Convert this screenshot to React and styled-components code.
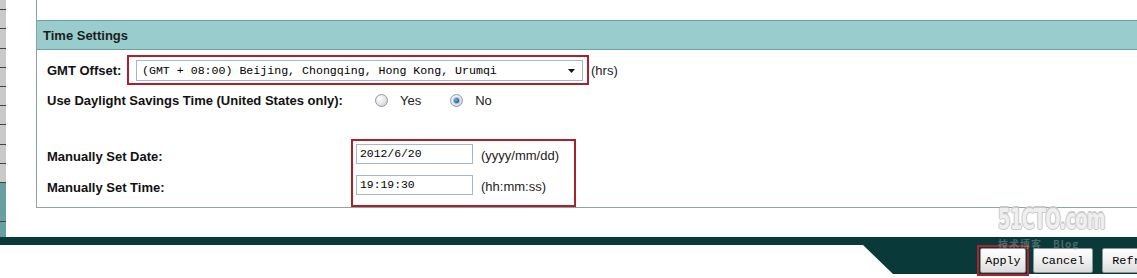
import React from "react";
import styled, { createGlobalStyle } from "styled-components";

const GlobalStyle = createGlobalStyle`
  html, body {
    margin: 0;
    padding: 0;
    overflow: hidden;
    background: #ffffff;
    font-family: "Liberation Sans", Arial, sans-serif;
  }
`;

const Page = styled.div`
  position: relative;
  width: 1137px;
  height: 278px;
  overflow: hidden;
`;

const Top = styled.div`
  display: flex;
  height: 237px;
`;

const Strip = styled.div`
  width: 6px;
  flex-shrink: 0;
  background:
    repeating-linear-gradient(
      to bottom,
      transparent 0,
      transparent 9px,
      #3c4545 9px,
      #3c4545 10px,
      transparent 10px,
      transparent 19.25px
    ),
    linear-gradient(to bottom, #cacaca 0, #cacaca 182px, #6a9f9f 182px);
`;

const Main = styled.div`
  flex: 1;
  padding-left: 30px;
`;

const Panel = styled.div`
  border-left: 1px solid #8ea4a4;
  border-bottom: 1px solid #8ea4a4;
  padding-top: 20px;
`;

const SectionHeader = styled.div`
  display: flex;
  align-items: center;
  height: 28px;
  padding-left: 6px;
  background: #99cccc;
  border-top: 1px solid #6f9f9f;
  border-bottom: 1px solid #6f9f9f;
  font-size: 13px;
  font-weight: bold;
  color: #1c1c1c;
`;

const Body = styled.div`
  padding-left: 10px;
`;

const Row = styled.div`
  display: flex;
  align-items: center;
  height: 30px;
  margin-top: ${(p) => p.$top || 0}px;
`;

const Label = styled.div`
  width: ${(p) => p.$width}px;
  flex-shrink: 0;
  font-size: 13px;
  font-weight: bold;
  color: #111;
  white-space: nowrap;
`;

const Highlight = styled.div`
  display: flex;
  flex-direction: ${(p) => (p.$column ? "column" : "row")};
  border: 2px solid #a8222c;
  padding: ${(p) => p.$pad};
  width: ${(p) => (p.$width ? `${p.$width}px` : "auto")};
  box-sizing: border-box;
  background: #fff;
`;

const SelectBox = styled.div`
  display: flex;
  align-items: center;
  justify-content: space-between;
  width: 447px;
  height: 21px;
  box-sizing: border-box;
  border: 1px solid #a9b4c0;
  padding: 0 7px 0 5px;
  font-family: "Liberation Mono", "Courier New", monospace;
  font-size: 11.6px;
  color: #000;
  white-space: nowrap;
`;

const Hint = styled.span`
  margin-left: ${(p) => p.$gap || 2}px;
  font-size: 13px;
  color: #222;
  white-space: nowrap;
`;

const RadioOption = styled.label`
  display: flex;
  align-items: center;
  margin-right: ${(p) => p.$after}px;
  font-size: 13px;
  color: #222;
`;

const Radio = styled.span`
  position: relative;
  width: 11px;
  height: 11px;
  margin-right: 12px;
  border-radius: 50%;
  border: 1px solid #8e9aa6;
  background: radial-gradient(circle at 35% 35%, #ffffff 0, #e4e4e4 55%, #c6c6c6 100%);

  &::after {
    content: "";
    display: ${(p) => (p.$checked ? "block" : "none")};
    position: absolute;
    left: 3px;
    top: 3px;
    width: 5px;
    height: 5px;
    border-radius: 50%;
    background: radial-gradient(circle at 40% 40%, #7fb2e0 0, #2a6299 60%, #173f66 100%);
    box-shadow: 0 0 0 1px #9cc0e0;
  }
`;

const ManualBlock = styled.div`
  display: flex;
  margin-top: 24px;
`;

const LabelColumn = styled.div`
  display: flex;
  flex-direction: column;
  width: 304px;
  padding-top: 2px;
`;

const Cell = styled.div`
  display: flex;
  align-items: center;
  height: 31px;
`;

const FieldRow = styled.div`
  display: flex;
  align-items: flex-start;
  height: 31px;
  padding: 3px 0 0 3px;
  box-sizing: border-box;
`;

const TextInput = styled.div`
  width: 117px;
  height: 20px;
  box-sizing: border-box;
  border: 1px solid #a6b7c6;
  padding-left: 3px;
  display: flex;
  align-items: center;
  font-family: "Liberation Mono", "Courier New", monospace;
  font-size: 11.4px;
  color: #000;
`;

const FieldHint = styled.span`
  margin-left: 8px;
  line-height: 20px;
  margin-top: 2px;
  font-size: 13px;
  color: #222;
  white-space: nowrap;
`;

const Band = styled.div`
  height: 8px;
  background: #0a3939;
`;

const Footer = styled.div`
  display: flex;
  height: 33px;
`;

const Toolbar = styled.div`
  position: relative;
  margin-left: 863px;
  flex: 1;
  display: flex;
  align-items: center;
  height: 31px;
  padding-left: 114px;

  &::before {
    content: "";
    position: absolute;
    left: 0;
    top: 0;
    right: 0;
    height: 29px;
    background: #0a3939;
    clip-path: polygon(0 0, 100% 0, 100% 100%, 30px 100%);
  }
`;

const ApplyMark = styled.div`
  position: relative;
  border: 2px solid #b0202a;
  padding: 1px;
  margin-right: 4px;
`;

const Button = styled.button`
  position: relative;
  flex-shrink: 0;
  width: ${(p) => p.$width}px;
  height: 25px;
  margin: 0 ${(p) => p.$after || 0}px 0 0;
  padding: 0;
  border: 1px solid #8f9597;
  border-radius: 2px;
  background: linear-gradient(to bottom, #fefefe 0, #f0f0f0 50%, #dcdcdc 100%);
  font-family: "Liberation Mono", "Courier New", monospace;
  font-size: 11.8px;
  color: #000;
  white-space: nowrap;
  overflow: hidden;
`;

const Watermark = styled.div`
  position: absolute;
  left: 998px;
  top: 205px;
  display: flex;
  flex-direction: column;
  align-items: flex-start;
  pointer-events: none;
`;

const MarkBig = styled.div`
  font-family: "DejaVu Sans Condensed", "DejaVu Sans", sans-serif;
  font-weight: bold;
  font-size: 20px;
  line-height: 20px;
  letter-spacing: -0.8px;
  color: #efefef;
  text-shadow:
    1px 0 0 #c9c9c9,
    -1px 0 0 #c9c9c9,
    0 1px 0 #c9c9c9,
    0 -1px 0 #c9c9c9;
  transform: scaleY(1.4);
  transform-origin: top left;
`;

const MarkSmall = styled.div`
  margin-top: 13px;
  font-family: "Noto Sans CJK SC", "DejaVu Sans", sans-serif;
  font-size: 10px;
  line-height: 11px;
  font-weight: bold;
  letter-spacing: 1px;
  color: rgba(190, 205, 205, 0.35);
  white-space: nowrap;
`;

function Caret() {
  return (
    <svg width="7" height="4" viewBox="0 0 7 4">
      <path d="M0 0H7L3.5 4Z" fill="#111" />
    </svg>
  );
}

export default function App() {
  return (
    <Page>
      <GlobalStyle />
      <Top>
        <Strip />
        <Main>
          <Panel>
            <SectionHeader>Time Settings</SectionHeader>
            <Body>
              <Row $top={5}>
                <Label $width={80}>GMT Offset:</Label>
                <Highlight $pad="3px 4px 2px 7px">
                  <SelectBox>
                    <span>(GMT + 08:00) Beijing, Chongqing, Hong Kong, Urumqi</span>
                    <Caret />
                  </SelectBox>
                </Highlight>
                <Hint>(hrs)</Hint>
              </Row>
              <Row>
                <Label $width={328}>Use Daylight Savings Time (United States only):</Label>
                <RadioOption $after={29}>
                  <Radio />
                  Yes
                </RadioOption>
                <RadioOption $after={0}>
                  <Radio $checked />
                  No
                </RadioOption>
              </Row>
              <ManualBlock>
                <LabelColumn>
                  <Cell>
                    <Label $width={300}>Manually Set Date:</Label>
                  </Cell>
                  <Cell>
                    <Label $width={300}>Manually Set Time:</Label>
                  </Cell>
                </LabelColumn>
                <Highlight $column $pad="0 0 2px 0" $width={225}>
                  <FieldRow>
                    <TextInput>2012/6/20</TextInput>
                    <FieldHint>(yyyy/mm/dd)</FieldHint>
                  </FieldRow>
                  <FieldRow>
                    <TextInput>19:19:30</TextInput>
                    <FieldHint>(hh:mm:ss)</FieldHint>
                  </FieldRow>
                </Highlight>
              </ManualBlock>
            </Body>
          </Panel>
        </Main>
      </Top>
      <Band />
      <Footer>
        <Toolbar>
          <ApplyMark>
            <Button $width={46}>Apply</Button>
          </ApplyMark>
          <Button $width={60} $after={9}>Cancel</Button>
          <Button $width={70}>Refresh</Button>
        </Toolbar>
      </Footer>
      <Watermark>
        <MarkBig>51CTO.com</MarkBig>
        <MarkSmall>技术博客　Blog</MarkSmall>
      </Watermark>
    </Page>
  );
}
